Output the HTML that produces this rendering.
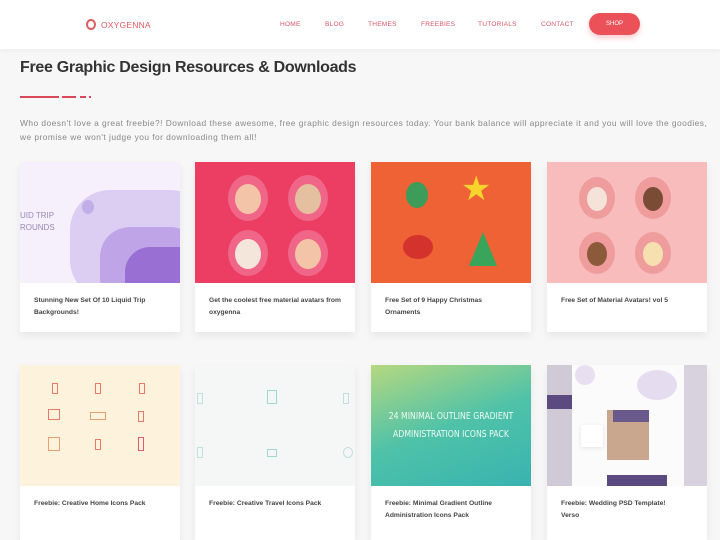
<!DOCTYPE html>
<html><head><meta charset="utf-8"><style>
*{margin:0;padding:0;box-sizing:border-box}
body{width:720px;height:536px;overflow:hidden;background:#f7f7f8;font-family:"Liberation Sans",sans-serif;position:relative}
.hdr{position:absolute;left:0;top:0;width:720px;height:49px;background:#fff;box-shadow:0 1px 6px rgba(0,0,0,.05)}
.logo{position:absolute;left:86px;top:19px;font-size:8.5px;color:#e05a62;letter-spacing:.2px}
.logo i{display:inline-block;width:10px;height:11px;border:2px solid #e05a62;border-radius:50%;vertical-align:-2px;margin-right:5px}
.nav{position:absolute;top:21px;font-size:6.6px;color:#d9576a;letter-spacing:.2px}
.shop{position:absolute;left:589px;top:13px;width:51px;height:22px;background:#ea5158;border-radius:11px;color:#fff;font-size:6px;text-align:center;line-height:22px;box-shadow:0 3px 6px rgba(234,81,88,.3)}
h1{position:absolute;left:20px;top:59px;font-size:16px;color:#333;font-weight:bold;letter-spacing:-.3px}
.ul{position:absolute;top:96px;height:2px;background:#d9495a}
p{position:absolute;left:20px;top:116px;width:700px;font-size:8.4px;line-height:14px;color:#888;letter-spacing:.46px;white-space:nowrap}
.card{position:absolute;width:160px;background:#fff;box-shadow:0 4px 8px rgba(0,0,0,.07);overflow:hidden}
.img{height:121px;position:relative;overflow:hidden}
.t{margin:12px 0 0 14px;font-size:6.7px;font-weight:bold;color:#444;line-height:12px;width:132px}
.c{position:absolute;border-radius:50%}
.ic{position:absolute;width:6px;height:11px;border:1.5px solid}
</style></head><body>
<div class="hdr">
<div class="logo"><i></i>OXYGENNA</div>
<div class="nav" style="left:280px">HOME</div>
<div class="nav" style="left:325px">BLOG</div>
<div class="nav" style="left:368px">THEMES</div>
<div class="nav" style="left:421px">FREEBIES</div>
<div class="nav" style="left:478px">TUTORIALS</div>
<div class="nav" style="left:541px">CONTACT</div>
<div class="shop">SHOP</div>
</div>
<h1>Free Graphic Design Resources &amp; Downloads</h1>
<div class="ul" style="left:20px;width:39px"></div>
<div class="ul" style="left:62px;width:14px"></div>
<div class="ul" style="left:80px;width:6px"></div>
<div class="ul" style="left:89px;width:2px"></div>
<p>Who doesn't love a great freebie?! Download these awesome, free graphic design resources today. Your bank balance will appreciate it and you will love the goodies,<br>we promise we won't judge you for downloading them all!</p>

<div class="card" style="left:20px;top:162px;height:170px"><div class="img" style="background:#f5f0fb">
<div class="c" style="left:50px;top:28px;width:140px;height:110px;background:#dccdf2;border-radius:40px"></div>
<div class="c" style="left:62px;top:38px;width:12px;height:14px;background:#c2aee6"></div>
<div class="c" style="left:80px;top:65px;width:100px;height:80px;background:#c0a4e8;border-radius:30px"></div>
<div class="c" style="left:105px;top:85px;width:80px;height:60px;background:#9a6fd4;border-radius:25px"></div>
<div style="position:absolute;left:0;top:48px;font-size:8px;color:#9a8ab8;line-height:12px">UID TRIP<br>ROUNDS</div>
</div><div class="t">Stunning New Set Of 10 Liquid Trip Backgrounds!</div></div>

<div class="card" style="left:195px;top:162px;height:170px"><div class="img" style="background:#ec3d63">
<div class="c" style="left:33px;top:13px;width:40px;height:46px;background:#f06688"></div>
<div class="c" style="left:93px;top:13px;width:40px;height:46px;background:#f06688"></div>
<div class="c" style="left:33px;top:68px;width:40px;height:46px;background:#f06688"></div>
<div class="c" style="left:93px;top:68px;width:40px;height:46px;background:#f06688"></div>
<div class="c" style="left:40px;top:22px;width:26px;height:30px;background:#f3c4a8"></div>
<div class="c" style="left:100px;top:22px;width:26px;height:30px;background:#e5c0a0"></div>
<div class="c" style="left:40px;top:77px;width:26px;height:30px;background:#f5e6dc"></div>
<div class="c" style="left:100px;top:77px;width:26px;height:30px;background:#f3c4a8"></div>
</div><div class="t">Get the coolest free material avatars from oxygenna</div></div>

<div class="card" style="left:371px;top:162px;height:170px"><div class="img" style="background:#ee6236">
<div style="position:absolute;left:90px;top:10px;font-size:34px;color:#f6d42c;line-height:1">★</div>
<div class="c" style="left:35px;top:20px;width:22px;height:26px;background:#3e9c5a"></div>
<div class="c" style="left:32px;top:73px;width:30px;height:24px;background:#d4322d"></div>
<div style="position:absolute;left:98px;top:70px;width:0;height:0;border-left:14px solid transparent;border-right:14px solid transparent;border-bottom:34px solid #38a55a"></div>
</div><div class="t" style="width:110px">Free Set of 9 Happy Christmas Ornaments</div></div>

<div class="card" style="left:547px;top:162px;height:170px"><div class="img" style="background:#f8bcbc">
<div class="c" style="left:32px;top:15px;width:36px;height:42px;background:#ef9c9c"></div>
<div class="c" style="left:88px;top:15px;width:36px;height:42px;background:#ef9c9c"></div>
<div class="c" style="left:32px;top:70px;width:36px;height:42px;background:#ef9c9c"></div>
<div class="c" style="left:88px;top:70px;width:36px;height:42px;background:#ef9c9c"></div>
<div class="c" style="left:40px;top:25px;width:20px;height:24px;background:#f5e3da"></div>
<div class="c" style="left:96px;top:25px;width:20px;height:24px;background:#7a4b35"></div>
<div class="c" style="left:40px;top:80px;width:20px;height:24px;background:#8a5a3a"></div>
<div class="c" style="left:96px;top:80px;width:20px;height:24px;background:#f7e0b0"></div>
</div><div class="t">Free Set of Material Avatars! vol 5</div></div>

<div class="card" style="left:20px;top:365px;height:175px"><div class="img" style="background:#fdf3dc">
<div class="ic" style="left:32px;top:18px;color:#e87a6a"></div>
<div class="ic" style="left:75px;top:18px;color:#e87a6a"></div>
<div class="ic" style="left:119px;top:18px;color:#e87a6a"></div>
<div class="ic" style="left:28px;top:44px;width:12px;color:#e87a6a"></div>
<div class="ic" style="left:70px;top:47px;width:16px;height:8px;color:#e8a070"></div>
<div class="ic" style="left:118px;top:46px;color:#e87a6a"></div>
<div class="ic" style="left:28px;top:72px;width:12px;height:14px;color:#e8a070"></div>
<div class="ic" style="left:75px;top:74px;color:#e87a6a"></div>
<div class="ic" style="left:118px;top:72px;height:14px;color:#e05a6a"></div>
</div><div class="t">Freebie: Creative Home Icons Pack</div></div>
<div class="card" style="left:195px;top:365px;height:175px"><div class="img" style="background:#f4f7f6">
<div class="ic" style="left:2px;top:28px;color:#bfe0dc"></div>
<div class="ic" style="left:72px;top:25px;width:10px;height:14px;color:#9fd8d0"></div>
<div class="ic" style="left:148px;top:28px;color:#bfe0dc"></div>
<div class="ic" style="left:2px;top:82px;color:#bfe0dc"></div>
<div class="ic" style="left:72px;top:84px;width:10px;height:8px;color:#9fd8d0"></div>
<div class="ic" style="left:148px;top:82px;width:10px;color:#bfe0dc;border-radius:50%"></div>
</div><div class="t">Freebie: Creative Travel Icons Pack</div></div>
<div class="card" style="left:371px;top:365px;height:175px"><div class="img" style="background:linear-gradient(160deg,#b6d880,#4fc2a8 50%,#38b3b0)">
<div style="position:absolute;left:0;width:160px;top:43px;text-align:center;font-size:9.4px;color:#eefaf3;letter-spacing:0;line-height:18px;font-family:'DejaVu Sans Condensed','Liberation Sans',sans-serif;transform:scaleX(.92)">24 MINIMAL OUTLINE GRADIENT<br>ADMINISTRATION ICONS PACK</div>
</div><div class="t">Freebie: Minimal Gradient Outline Administration Icons Pack</div></div>
<div class="card" style="left:547px;top:365px;height:175px"><div class="img" style="background:#efedf2">
<div style="position:absolute;left:25px;top:0;width:112px;height:121px;background:#fbfbfc"></div>
<div style="position:absolute;left:28px;top:0;width:20px;height:20px;background:#e8e0f0;border-radius:50%"></div>
<div style="position:absolute;left:90px;top:5px;width:40px;height:30px;background:#e6dcef;border-radius:50%"></div>
<div style="position:absolute;left:34px;top:60px;width:22px;height:22px;background:#fff;box-shadow:0 1px 4px rgba(0,0,0,.1)"></div>
<div style="position:absolute;left:60px;top:45px;width:42px;height:50px;background:#c9a78f"></div>
<div style="position:absolute;left:66px;top:45px;width:36px;height:12px;background:#6a5a8c"></div>
<div style="position:absolute;left:60px;top:110px;width:60px;height:11px;background:#5b4a80"></div>
<div style="position:absolute;left:0;top:0;width:25px;height:121px;background:#d0cad6"></div>
<div style="position:absolute;left:0;top:30px;width:25px;height:14px;background:#5b4a80"></div>
<div style="position:absolute;left:137px;top:0;width:23px;height:121px;background:#d8d2de"></div>
</div><div class="t" style="width:120px">Freebie: Wedding PSD Template! Verso</div></div>
</body></html>
